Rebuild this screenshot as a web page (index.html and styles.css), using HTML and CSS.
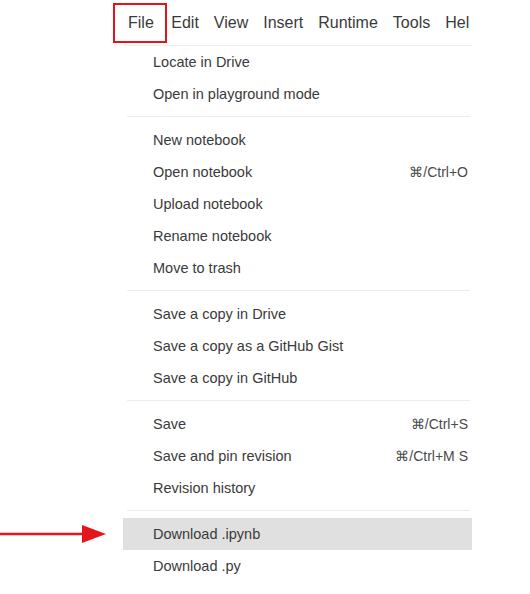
FILE: index.html
```html
<!DOCTYPE html>
<html>
<head>
<meta charset="utf-8">
<link rel="stylesheet" href="styles.css">
</head>
<body>
<div class="page">
  <nav class="menubar">
    <span class="mb-item mb-file">File</span>
    <span class="mb-item">Edit</span>
    <span class="mb-item">View</span>
    <span class="mb-item">Insert</span>
    <span class="mb-item">Runtime</span>
    <span class="mb-item">Tools</span>
    <span class="mb-item">Hel</span>
  </nav>
  <div class="menu">
    <div class="row"><span>Locate in Drive</span></div>
    <div class="row"><span>Open in playground mode</span></div>
    <div class="sep"></div>
    <div class="row"><span>New notebook</span></div>
    <div class="row"><span>Open notebook</span><span class="kbd">⌘/Ctrl+O</span></div>
    <div class="row"><span>Upload notebook</span></div>
    <div class="row"><span>Rename notebook</span></div>
    <div class="row"><span>Move to trash</span></div>
    <div class="sep"></div>
    <div class="row"><span>Save a copy in Drive</span></div>
    <div class="row"><span>Save a copy as a GitHub Gist</span></div>
    <div class="row"><span>Save a copy in GitHub</span></div>
    <div class="sep"></div>
    <div class="row"><span>Save</span><span class="kbd">⌘/Ctrl+S</span></div>
    <div class="row"><span>Save and pin revision</span><span class="kbd">⌘/Ctrl+M S</span></div>
    <div class="row"><span>Revision history</span></div>
    <div class="sep"></div>
    <div class="row active"><span>Download .ipynb</span>
      <svg class="arrow" width="108" height="22" viewBox="0 0 108 22">
        <line x1="0" y1="11" x2="86" y2="11" stroke="#e3161c" stroke-width="2.5"/>
        <polygon points="82,2 106,11 82,20" fill="#e3161c"/>
      </svg>
    </div>
    <div class="row"><span>Download .py</span></div>
  </div>
</div>
</body>
</html>
```

FILE: styles.css
```css
html, body {
  margin: 0;
  padding: 0;
  background: #ffffff;
}
.page {
  width: 530px;
  height: 594px;
  overflow: hidden;
  font-family: "Liberation Sans", Arial, sans-serif;
  color: #3a3a3a;
}
.menubar {
  display: flex;
  align-items: center;
  height: 40px;
  margin-top: 3px;
  padding-left: 113px;
  font-size: 16px;
  color: #3a3a3a;
}
.mb-item {
  padding: 0 7.5px;
  line-height: 36px;
}
.mb-file {
  border: 2px solid #e0161b;
  padding: 0 11px 0 13px;
  margin-right: -3px;
}
.menu {
  margin-left: 123px;
  width: 349px;
  margin-top: 2px;
  display: flex;
  flex-direction: column;
  font-size: 14.5px;
  border-top: 1px solid #f0f0f0;
}
.row {
  position: relative;
  height: 32px;
  display: flex;
  align-items: center;
  justify-content: space-between;
  padding: 0 4px 0 30px;
}
.row.active {
  background: #e0e0e0;
}
.kbd {
  color: #4a4a4a;
  font-size: 14px;
}
.sep {
  height: 1px;
  background: #ececec;
  margin: 6px 2px 7px 4px;
}
.arrow {
  position: absolute;
  left: -123px;
  top: 5px;
}
```
